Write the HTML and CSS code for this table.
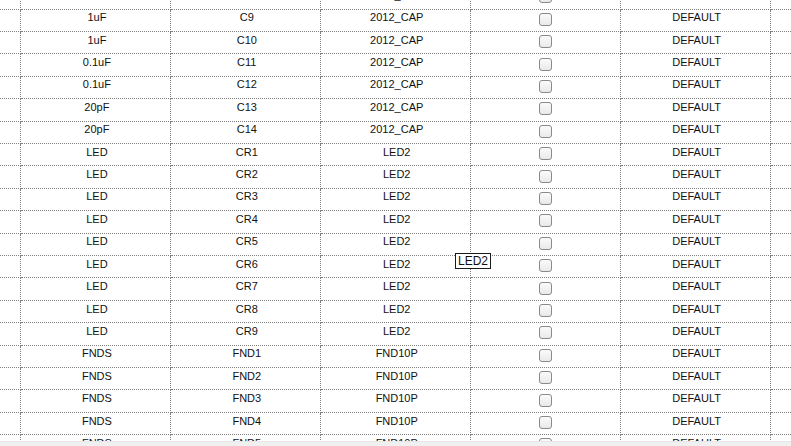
FILE: index.html
```html
<!DOCTYPE html>
<html lang="en">
<head>
<meta charset="UTF-8">
<title>Parts</title>
<link rel="stylesheet" href="styles.css">
</head>
<body>

<div class="grille">
<table class="pieces">
<tbody>
<tr><td></td><td>1uF</td><td>C8</td><td>2012_CAP</td><td><span class="case"></span></td><td>DEFAULT</td><td></td></tr>
<tr><td></td><td>1uF</td><td>C9</td><td>2012_CAP</td><td><span class="case"></span></td><td>DEFAULT</td><td></td></tr>
<tr><td></td><td>1uF</td><td>C10</td><td>2012_CAP</td><td><span class="case"></span></td><td>DEFAULT</td><td></td></tr>
<tr><td></td><td>0.1uF</td><td>C11</td><td>2012_CAP</td><td><span class="case"></span></td><td>DEFAULT</td><td></td></tr>
<tr><td></td><td>0.1uF</td><td>C12</td><td>2012_CAP</td><td><span class="case"></span></td><td>DEFAULT</td><td></td></tr>
<tr><td></td><td>20pF</td><td>C13</td><td>2012_CAP</td><td><span class="case"></span></td><td>DEFAULT</td><td></td></tr>
<tr><td></td><td>20pF</td><td>C14</td><td>2012_CAP</td><td><span class="case"></span></td><td>DEFAULT</td><td></td></tr>
<tr><td></td><td>LED</td><td>CR1</td><td>LED2</td><td><span class="case"></span></td><td>DEFAULT</td><td></td></tr>
<tr><td></td><td>LED</td><td>CR2</td><td>LED2</td><td><span class="case"></span></td><td>DEFAULT</td><td></td></tr>
<tr><td></td><td>LED</td><td>CR3</td><td>LED2</td><td><span class="case"></span></td><td>DEFAULT</td><td></td></tr>
<tr><td></td><td>LED</td><td>CR4</td><td>LED2</td><td><span class="case"></span></td><td>DEFAULT</td><td></td></tr>
<tr><td></td><td>LED</td><td>CR5</td><td>LED2</td><td><span class="case"></span></td><td>DEFAULT</td><td></td></tr>
<tr><td></td><td>LED</td><td>CR6</td><td>LED2</td><td><span class="case"></span></td><td>DEFAULT</td><td></td></tr>
<tr><td></td><td>LED</td><td>CR7</td><td>LED2</td><td><span class="case"></span></td><td>DEFAULT</td><td></td></tr>
<tr><td></td><td>LED</td><td>CR8</td><td>LED2</td><td><span class="case"></span></td><td>DEFAULT</td><td></td></tr>
<tr><td></td><td>LED</td><td>CR9</td><td>LED2</td><td><span class="case"></span></td><td>DEFAULT</td><td></td></tr>
<tr><td></td><td>FNDS</td><td>FND1</td><td>FND10P</td><td><span class="case"></span></td><td>DEFAULT</td><td></td></tr>
<tr><td></td><td>FNDS</td><td>FND2</td><td>FND10P</td><td><span class="case"></span></td><td>DEFAULT</td><td></td></tr>
<tr><td></td><td>FNDS</td><td>FND3</td><td>FND10P</td><td><span class="case"></span></td><td>DEFAULT</td><td></td></tr>
<tr><td></td><td>FNDS</td><td>FND4</td><td>FND10P</td><td><span class="case"></span></td><td>DEFAULT</td><td></td></tr>
<tr><td></td><td>FNDS</td><td>FND5</td><td>FND10P</td><td><span class="case"></span></td><td>DEFAULT</td><td></td></tr>
</tbody>
</table>

<div class="bulle">LED2</div>
</div>

<div class="defile"></div>

</body>
</html>
```

FILE: styles.css
```css
html, body {
  margin: 0;
  padding: 0;
  background: #fff;
}

body {
  font-family: "Liberation Sans", Arial, sans-serif;
  font-size: 11px;
  color: #111;
  width: 791px;
  height: 446px;
  overflow: hidden;
}

/* zone de la grille, deja defilee */
.grille {
  position: relative;
  height: 441px;
  overflow: hidden;
}

.pieces {
  border-collapse: collapse;
  table-layout: fixed;
  width: 1050px;
  margin-left: -129px;
  margin-top: -13.4px;
}

.pieces tr {
  height: 22.42px;
}

.pieces td {
  padding: 0 0 5px 2px;
  text-align: center;
  vertical-align: middle;
  border-right: 1px dotted #808080;
  border-bottom: 1px dotted #808080;
  white-space: nowrap;
  overflow: hidden;
  line-height: 13px;
}

.case {
  display: block;
  width: 11px;
  height: 11px;
  margin: 3px auto 0;
  border: 1px solid #8a8a8a;
  border-radius: 3px;
  background: linear-gradient(#fbfbfb, #e9e9e9);
  position: relative;
  left: -1px;
}

.bulle {
  position: absolute;
  left: 455px;
  top: 253px;
  padding: 0 2px;
  border: 1px solid #1a1a1a;
  background: #fff;
  color: #111;
  font-size: 12px;
  line-height: 14px;
}

.defile {
  height: 5px;
  background: #f0f0f0;
  border-top: 1px solid #e6e6e6;
  box-sizing: border-box;
}
```
